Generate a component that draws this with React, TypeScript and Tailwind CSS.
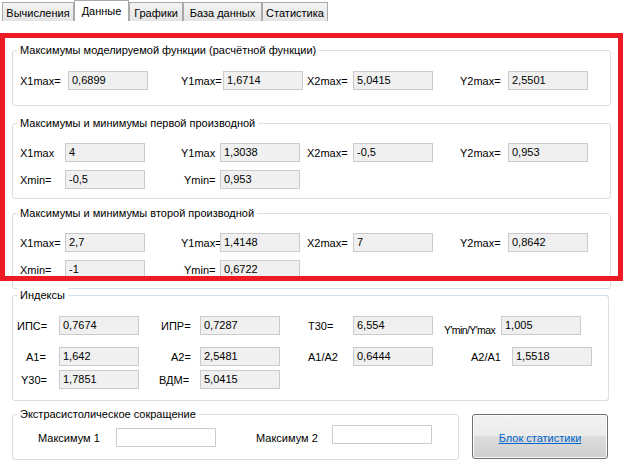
import React from "react";

function L({ c, t }: { c: string; t: string }) {
  return <span className={`shrink-0 whitespace-nowrap leading-[14px] ${c}`}>{t}</span>;
}

function B({ v, c = "" }: { v: string; c?: string }) {
  return (
    <div className={`h-[19px] w-[80px] shrink-0 border border-[#cbcbcb] bg-[#f0f0f0] pl-[3px] leading-[17px] text-black ${c}`}>
      {v}
    </div>
  );
}

function G({ title, className, children }: { title: string; className: string; children: React.ReactNode }) {
  return (
    <div className={`rounded-[3px] border border-[#d5dfe5] ${className}`}>
      <div className="-mt-[8px] ml-[4px] w-fit bg-white px-[3px] leading-[14px]">{title}</div>
      {children}
    </div>
  );
}

function Tab({ t, c, sel = false }: { t: string; c: string; sel?: boolean }) {
  return sel ? (
    <div className={`h-[21px] border border-b-0 border-[#a9a9a9] bg-white pt-[3px] text-center leading-[14px] ${c}`}>{t}</div>
  ) : (
    <div
      className={`h-[19px] border border-b-0 border-[#a9a9a9] bg-[linear-gradient(to_bottom,#f4f4f4,#e4e4e4)] pt-[3px] text-center leading-[14px] ${c}`}
    >
      {t}
    </div>
  );
}

export default function App() {
  return (
    <div className="relative h-[469px] w-[636px] overflow-hidden bg-white font-['Liberation_Sans',Arial,sans-serif] text-[11px] text-black">
      <div className="flex h-[21px] items-end pl-[2px]">
        <Tab t="Вычисления" c="w-[72px]" />
        <Tab t="Данные" c="w-[55px]" sel />
        <Tab t="Графики" c="w-[54px]" />
        <Tab t="База данных" c="w-[79px]" />
        <Tab t="Статистика" c="w-[66px]" />
      </div>

      <G title="Максимумы моделируемой функции (расчётной функции)" className="ml-[12px] mt-[29px] w-[599px] pb-[15px]">
        <div className="mt-[14px] flex items-center">
          <L c="ml-[7px] w-[48px]" t="X1max=" />
          <B v="0,6899" />
          <L c="ml-[33px] w-[42px]" t="Y1max=" />
          <B v="1,6714" />
          <L c="ml-[4px] w-[46px]" t="X2max=" />
          <B v="5,0415" />
          <L c="ml-[27px] w-[48px]" t="Y2max=" />
          <B v="2,5501" />
        </div>
      </G>

      <G title="Максимумы и минимумы первой производной" className="ml-[12px] mt-[17px] w-[599px] pb-[9px]">
        <div className="mt-[13px] flex items-center">
          <L c="ml-[7px] w-[45px]" t="X1max" />
          <B v="4" />
          <L c="ml-[36px] w-[39px]" t="Y1max" />
          <B v="1,3038" />
          <L c="ml-[7px] w-[46px]" t="X2max=" />
          <B v="-0,5" />
          <L c="ml-[27px] w-[48px]" t="Y2max=" />
          <B v="0,953" />
        </div>
        <div className="mt-[8px] flex items-center">
          <L c="ml-[7px] w-[45px]" t="Xmin=" />
          <B v="-0,5" />
          <L c="ml-[39px] w-[36px]" t="Ymin=" />
          <B v="0,953" />
        </div>
      </G>

      <G title="Максимумы и минимумы второй производной" className="ml-[12px] mt-[14px] w-[599px] pb-[9px]">
        <div className="mt-[13px] flex items-center">
          <L c="ml-[7px] w-[45px]" t="X1max=" />
          <B v="2,7" />
          <L c="ml-[36px] w-[39px]" t="Y1max=" />
          <B v="1,4148" />
          <L c="ml-[7px] w-[46px]" t="X2max=" />
          <B v="7" />
          <L c="ml-[27px] w-[48px]" t="Y2max=" />
          <B v="0,8642" />
        </div>
        <div className="mt-[8px] flex items-center">
          <L c="ml-[7px] w-[45px]" t="Xmin=" />
          <B v="-1" />
          <L c="ml-[39px] w-[36px]" t="Ymin=" />
          <B v="0,6722" />
        </div>
      </G>

      <G title="Индексы" className="ml-[12px] mt-[6px] w-[597px] pb-[11px]">
        <div className="mt-[14px] flex items-center">
          <L c="ml-[4px] w-[42px]" t="ИПС=" />
          <B v="0,7674" />
          <L c="ml-[22px] w-[39px]" t="ИПР=" />
          <B v="0,7287" />
          <L c="ml-[28px] w-[45px]" t="T30=" />
          <B v="6,554" />
          <span className="ml-[11px] w-[57px] shrink-0 self-end whitespace-nowrap text-[10.5px] leading-[10px] tracking-[-0.6px]">
            Y'min/Y'max
          </span>
          <B v="1,005" />
        </div>
        <div className="mt-[12px] flex items-center">
          <L c="ml-[13px] w-[33px]" t="A1=" />
          <B v="1,642" />
          <L c="ml-[32px] w-[29px]" t="A2=" />
          <B v="2,5481" />
          <L c="ml-[28px] w-[45px]" t="A1/A2" />
          <B v="0,6444" />
          <L c="ml-[38px] w-[41px]" t="A2/A1" />
          <B v="1,5518" />
        </div>
        <div className="mt-[4px] flex items-center">
          <L c="ml-[8px] w-[38px]" t="Y30=" />
          <B v="1,7851" />
          <L c="ml-[20px] w-[41px]" t="ВДМ=" />
          <B v="5,0415" />
        </div>
      </G>

      <div className="ml-[12px] mt-[13px] flex items-start">
        <G title="Экстрасистолическое сокращение" className="w-[447px] pb-[12px]">
          <div className="mt-[4px] flex items-start">
            <L c="ml-[25px] mt-[6px] w-[78px]" t="Максимум 1" />
            <div className="mt-[3px] h-[19px] w-[100px] shrink-0 border border-[#cccccc] bg-white" />
            <L c="ml-[40px] mt-[6px] w-[76px]" t="Максимум 2" />
            <div className="h-[19px] w-[100px] shrink-0 border border-[#cccccc] bg-white" />
          </div>
        </G>
        <div className="ml-[13px] flex h-[45px] w-[136px] shrink-0 items-center justify-center rounded-[3px] border border-[#707070] bg-[linear-gradient(to_bottom,#f2f2f2_0%,#ebebeb_50%,#dddddd_50%,#cfcfcf_100%)] pt-[3px] shadow-[inset_0_0_0_1px_#fbfbfb]">
          <span className="text-[#0066cc] underline">Блок статистики</span>
        </div>
      </div>

      <div className="pointer-events-none absolute left-0 top-[33px] h-[248px] w-[623px] border-[5px] border-[#ed1c24]" />
    </div>
  );
}
